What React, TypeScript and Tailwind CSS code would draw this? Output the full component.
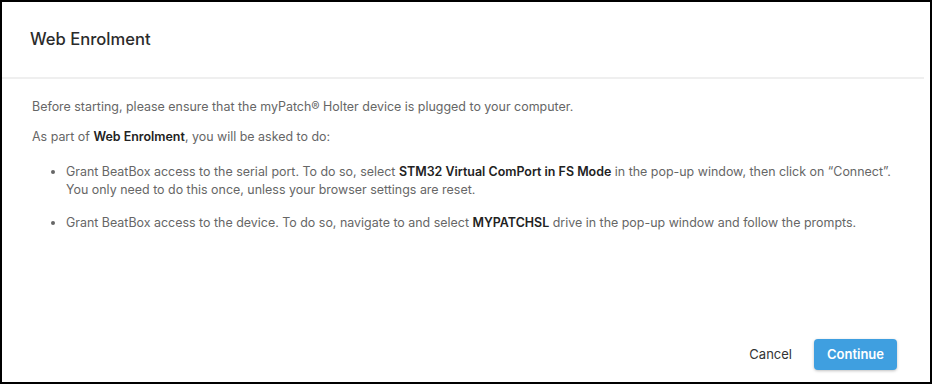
export default function App() {
  return (
    <div className="w-[934px] h-[385px] bg-white" style={{ fontFamily: "Inter, 'Noto Sans', sans-serif" }}>
      <div className="w-[932px] h-[384px] border-2 border-black flex flex-col">
        <div className="h-[77px] flex items-center pl-[28px] border-b-2 border-[#efefef] mr-[6px]">
          <h1 className="text-[16.6px] font-medium text-[#2b2b2b] leading-none">Web Enrolment</h1>
        </div>
        <div className="pl-[30px] pr-[24px] pt-[19px] text-[12.45px] text-[#666] leading-[18px] flex-1">
          <p>Before starting, please ensure that the myPatch® Holter device is plugged to your computer.</p>
          <p className="mt-[12px]">
            As part of <strong className="font-semibold text-[#222]">Web Enrolment</strong>, you will be asked to do:
          </p>
          <ul className="mt-[17px] pl-[34px] list-disc marker:text-[#666]">
            <li>
              Grant BeatBox access to the serial port. To do so, select{" "}
              <strong className="font-semibold text-[#222]">STM32 Virtual ComPort in FS Mode</strong> in the pop-up window, then click on “Connect”. You only need to do this once, unless your browser settings are reset.
            </li>
            <li className="mt-[15px]">
              Grant BeatBox access to the device. To do so, navigate to and select{" "}
              <strong className="font-semibold text-[#222]">MYPATCHSL</strong> drive in the pop-up window and follow the prompts.
            </li>
          </ul>
        </div>
        <div className="flex items-center justify-end gap-[20px] pr-[33px] pb-[12px]">
          <button className="text-[13px] text-[#333] px-[2px]">Cancel</button>
          <button className="w-[83px] h-[31px] rounded-[4px] bg-[#3f9fe0] text-white text-[13px] font-semibold shadow-[0_1px_3px_rgba(0,0,0,0.25)]">
            Continue
          </button>
        </div>
      </div>
    </div>
  );
}
